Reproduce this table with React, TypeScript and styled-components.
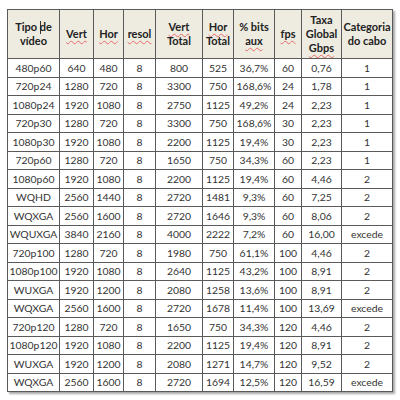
import React from 'react';
import styled, { createGlobalStyle } from 'styled-components';

const GlobalStyle = createGlobalStyle`
	html, body {
		margin: 0;
		padding: 0;
		background: #ffffff;
	}
	body {
		font-family: Lato, "Liberation Sans", sans-serif;
	}
`

const Page = styled.div`
	width: 400px;
	height: 400px;
	padding: 9px 0 0 7px;
	box-sizing: border-box;
	background: #fff;
`

const Table = styled.table`
	border-collapse: collapse;
	table-layout: fixed;
	width: 386px;
	box-shadow: 2px 2px 2px rgba(0, 0, 0, 0.35);
	font-family: Lato, "Liberation Sans", sans-serif;
`

const HeadCell = styled.th`
	background: #eeece1;
	border: 1px solid #5a5a5a;
	height: 48px;
	padding: 0;
	font-size: 11px;
	font-weight: 700;
	line-height: 14px;
	color: #222;
	text-align: center;
	vertical-align: middle;
	white-space: pre-line;
`

const Row = styled.tr`
	height: 18.5px;
`

const Cell = styled.td`
	border: 1px solid #5a5a5a;
	padding: 0;
	font-size: 10.4px;
	line-height: 12px;
	color: #333;
	text-align: center;
	vertical-align: middle;
	white-space: nowrap;
`

const Typo = styled.span`
	text-decoration: underline wavy #e86a6a;
	text-decoration-thickness: 1px;
	text-underline-offset: 2px;
	text-decoration-skip-ink: none;
`

const Caret = styled.span`
	display: inline-block;
	width: 1px;
	height: 13px;
	background: #333;
	vertical-align: -3px;
	margin-right: -1px;
`

const widths = [52, 34, 30, 32, 47, 31, 41, 27, 40, 51]

const rows: string[][] = [
	['480p60', '640', '480', '8', '800', '525', '36,7%', '60', '0,76', '1'],
	['720p24', '1280', '720', '8', '3300', '750', '168,6%', '24', '1,78', '1'],
	['1080p24', '1920', '1080', '8', '2750', '1125', '49,2%', '24', '2,23', '1'],
	['720p30', '1280', '720', '8', '3300', '750', '168,6%', '30', '2,23', '1'],
	['1080p30', '1920', '1080', '8', '2200', '1125', '19,4%', '30', '2,23', '1'],
	['720p60', '1280', '720', '8', '1650', '750', '34,3%', '60', '2,23', '1'],
	['1080p60', '1920', '1080', '8', '2200', '1125', '19,4%', '60', '4,46', '2'],
	['WQHD', '2560', '1440', '8', '2720', '1481', '9,3%', '60', '7,25', '2'],
	['WQXGA', '2560', '1600', '8', '2720', '1646', '9,3%', '60', '8,06', '2'],
	['WQUXGA', '3840', '2160', '8', '4000', '2222', '7,2%', '60', '16,00', 'excede'],
	['720p100', '1280', '720', '8', '1980', '750', '61,1%', '100', '4,46', '2'],
	['1080p100', '1920', '1080', '8', '2640', '1125', '43,2%', '100', '8,91', '2'],
	['WUXGA', '1920', '1200', '8', '2080', '1258', '13,6%', '100', '8,91', '2'],
	['WQXGA', '2560', '1600', '8', '2720', '1678', '11,4%', '100', '13,69', 'excede'],
	['720p120', '1280', '720', '8', '1650', '750', '34,3%', '120', '4,46', '2'],
	['1080p120', '1920', '1080', '8', '2200', '1125', '19,4%', '120', '8,91', '2'],
	['WUXGA', '1920', '1200', '8', '2080', '1271', '14,7%', '120', '9,52', '2'],
	['WQXGA', '2560', '1600', '8', '2720', '1694', '12,5%', '120', '16,59', 'excede'],
]

const App: React.FC = () => {
	return (
		<Page>
			<GlobalStyle />
			<Table>
				<colgroup>
					{widths.map((w, i) => <col key={i} style={{ width: w }} />)}
				</colgroup>
				<thead>
					<tr>
						<HeadCell>Tipo <Caret />de{'\n'}vídeo</HeadCell>
						<HeadCell><Typo>Vert</Typo></HeadCell>
						<HeadCell><Typo>Hor</Typo></HeadCell>
						<HeadCell><Typo>resol</Typo></HeadCell>
						<HeadCell><Typo>Vert</Typo>{'\n'}Total</HeadCell>
						<HeadCell><Typo>Hor</Typo>{'\n'}Total</HeadCell>
						<HeadCell>% bits{'\n'}<Typo>aux</Typo></HeadCell>
						<HeadCell><Typo>fps</Typo></HeadCell>
						<HeadCell>Taxa{'\n'}Global{'\n'}<Typo>Gbps</Typo></HeadCell>
						<HeadCell>Categoria{'\n'}do cabo</HeadCell>
					</tr>
				</thead>
				<tbody>
					{rows.map((r, i) => (
						<Row key={i}>
							{r.map((v, j) => <Cell key={j}>{v}</Cell>)}
						</Row>
					))}
				</tbody>
			</Table>
		</Page>
	)
}

export default App
